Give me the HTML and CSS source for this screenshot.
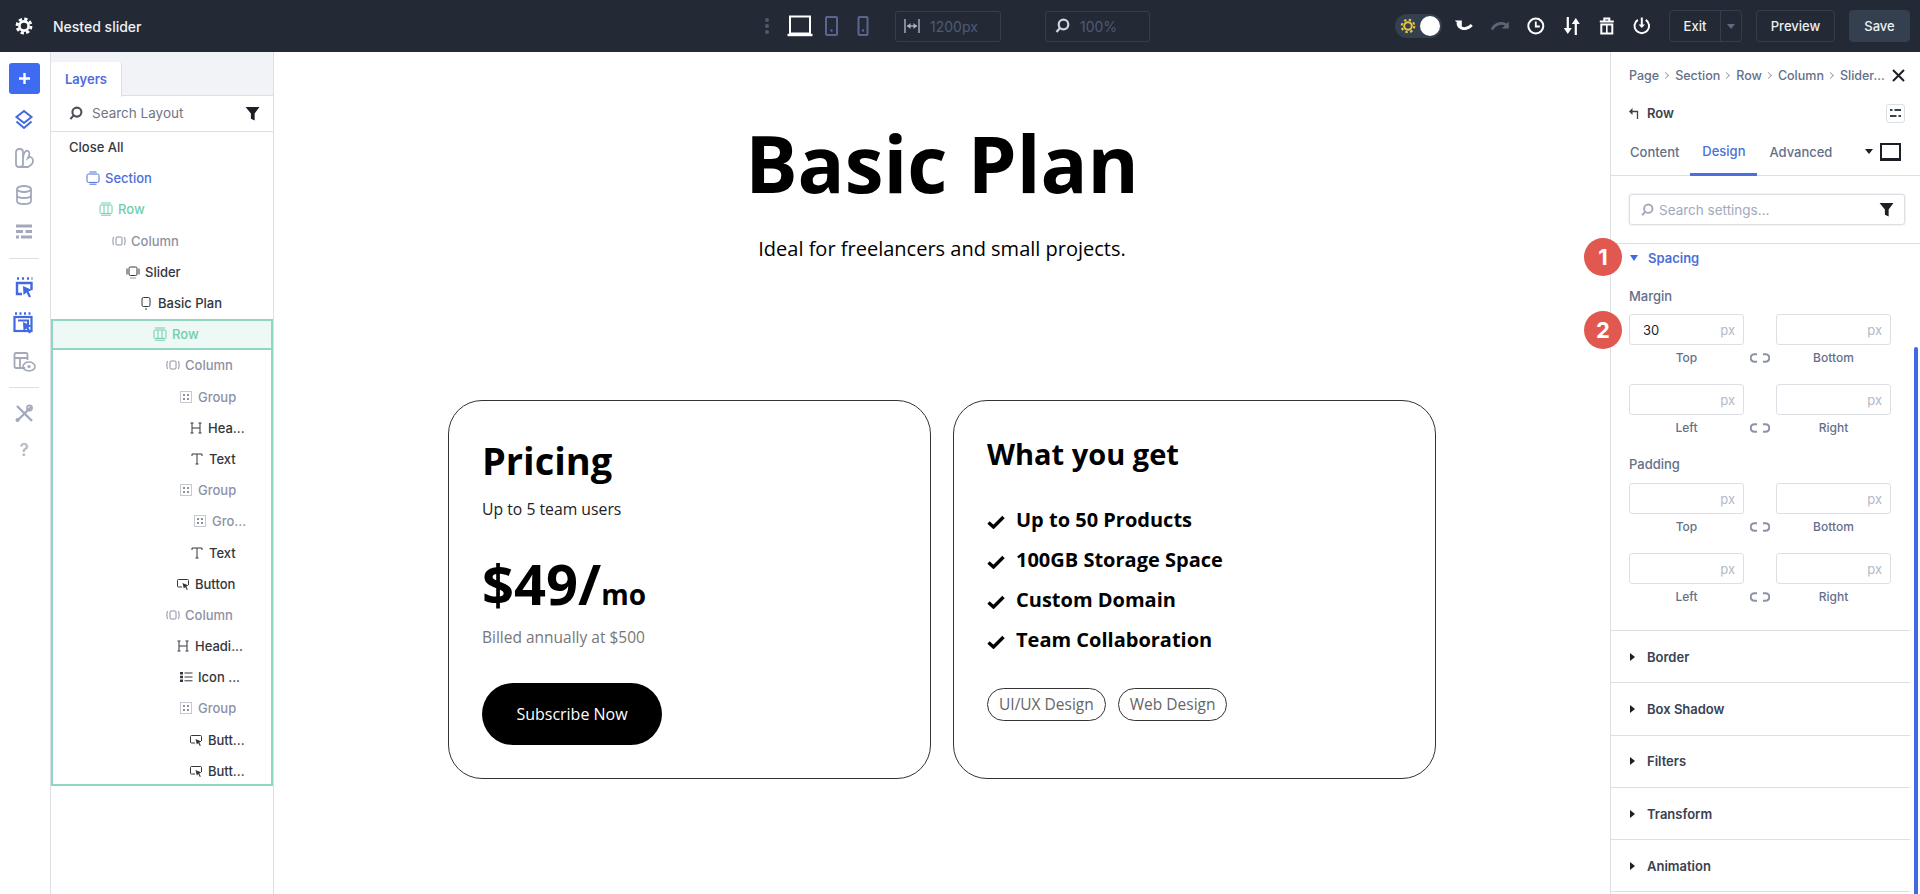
FILE: index.html
```html
<!DOCTYPE html>
<html>
<head>
    <title>Nested slider</title>
    <link rel="stylesheet" href="styles.css">
</head>
<body>
    <svg class="sprite" width="0" height="0">
        <symbol id="i-search" viewBox="0 0 16 16"><circle cx="9.5" cy="6.5" r="4.8" fill="none" stroke="currentColor" stroke-width="2.2"/><path d="M5.8 10.2 2.5 14" fill="none" stroke="currentColor" stroke-width="2.2"/></symbol>
        <symbol id="i-filter" viewBox="0 0 14 14"><path d="M0.5 1h13L9 7v6.5L5.5 12V7z" fill="currentColor"/></symbol>
        <symbol id="i-section" viewBox="0 0 14 14"><rect x="1" y="3" width="12" height="8.4" rx="1.5" fill="none" stroke="currentColor"/><path d="M3.5 1h7M3.5 13.2h7" stroke="currentColor"/></symbol>
        <symbol id="i-row" viewBox="0 0 14 14"><rect x="1" y="3" width="12" height="8.4" rx="1" fill="none" stroke="currentColor"/><path d="M5 3v8.4M9 3v8.4M2 1h10M2 13.2h10" stroke="currentColor"/></symbol>
        <symbol id="i-column" viewBox="0 0 14 14"><rect x="4" y="3" width="6" height="8" rx="1" fill="none" stroke="currentColor"/><path d="M1.5 3C.7 5 .7 9 1.5 11M12.5 3c.8 2 .8 6 0 8" fill="none" stroke="currentColor"/></symbol>
        <symbol id="i-slider" viewBox="0 0 14 14"><rect x="3" y="2" width="8" height="8.5" rx="1.5" fill="none" stroke="currentColor"/><path d="M1 3.5v6M13 3.5v6" stroke="currentColor"/><path d="M4.5 13h5" stroke="currentColor" stroke-dasharray="1 1"/></symbol>
        <symbol id="i-module" viewBox="0 0 14 14"><rect x="3" y="1.5" width="8" height="9" rx="1.5" fill="none" stroke="currentColor"/><path d="M6 13h2" stroke="currentColor"/></symbol>
        <symbol id="i-group" viewBox="0 0 14 14"><rect x="1.5" y="1.5" width="11" height="11" fill="none" stroke="currentColor" stroke-dasharray="1 1"/><path d="M4 4h2v2H4zM8 4h2v2H8zM4 8h2v2H4zM8 8h2v2H8z" fill="currentColor"/></symbol>
        <symbol id="i-head" viewBox="0 0 14 14"><path d="M3 2v10M11 2v10M3 7h8M1.5 2h3M1.5 12h3M9.5 2h3M9.5 12h3" fill="none" stroke="currentColor"/></symbol>
        <symbol id="i-text" viewBox="0 0 14 14"><path d="M7 2v10M2 4V2h10v2M5.5 12h3" fill="none" stroke="currentColor"/></symbol>
        <symbol id="i-button" viewBox="0 0 14 14"><path d="M6 10H2.500a1 1 0 0 1-1-1V3.500a1 1 0 0 1 1-1h9a1 1 0 0 1 1 1V8" fill="none" stroke="currentColor"/><path d="M6.500 6l6 2.500-2.200 1 1.500 3-1 .4-1.500-3-1.500 1.500z" fill="currentColor"/></symbol>
        <symbol id="i-list" viewBox="0 0 14 14"><path d="M1 2h3v2.400H1zM1 5.800h3v2.400H1zM1 9.600h3V12H1z" fill="currentColor"/><path d="M5.500 3h8M5.500 7h8M5.500 10.800h8" stroke="currentColor"/></symbol>
        <symbol id="i-link" viewBox="0 0 20 10"><path d="M7 1.200H4.500a3.800 3.800 0 0 0 0 7.600H7M13 1.200h2.500a3.800 3.800 0 0 1 0 7.600H13" fill="none" stroke="currentColor" stroke-width="2"/></symbol>
        <symbol id="i-pointer" viewBox="0 0 24 24"><path d="M5 3.500h2M10 3.500h2M15 3.500h2M19.500 3.500h1" stroke="currentColor" stroke-width="2.600"/><path d="M10 19H5V8h14.500v7" fill="none" stroke="currentColor" stroke-width="2.400"/><path d="M11 11l9 4-3.500 1.500 2.500 5-2 1-2.500-5-3 2.500z" fill="currentColor"/></symbol>
    </svg>

    <div class="app">
        <header class="topbar">
            <div class="tb-left">
                <svg class="gear" width="18" height="18" viewBox="0 0 18 18"><circle cx="9" cy="9" r="4.6" fill="none" stroke="#fff" stroke-width="2.600"/><circle cx="9" cy="9" r="7" fill="none" stroke="#fff" stroke-width="2.800" stroke-dasharray="3.300 2.200"/></svg>
                <span class="title">Nested slider</span>
            </div>
            <svg class="dots" width="10" height="18" viewBox="0 0 10 18"><circle cx="5" cy="3" r="2"/><circle cx="5" cy="9" r="2"/><circle cx="5" cy="15" r="2"/></svg>
            <svg class="dev-laptop" width="26" height="22" viewBox="0 0 26 22"><rect x="3" y="1.500" width="20" height="17" fill="none" stroke="#fff" stroke-width="2"/><path d="M0.5 20h25" stroke="#fff" stroke-width="2.400"/></svg>
            <svg class="dev-tablet" width="13" height="20" viewBox="0 0 13 20"><rect x="1" y="1" width="11" height="18" rx="1" fill="none" stroke="#5a6690" stroke-width="2"/><circle cx="6.500" cy="14.500" r="1.200" fill="#5a6690"/></svg>
            <svg class="dev-phone" width="12" height="20" viewBox="0 0 12 20"><rect x="1.500" y="1" width="9" height="18" rx="1" fill="none" stroke="#5a6690" stroke-width="2"/><circle cx="6" cy="14.500" r="1.200" fill="#5a6690"/></svg>
            <div class="tb-box width-box">
                <svg width="16" height="16" viewBox="0 0 16 16"><path d="M1 1v14M15 1v14" stroke="#a9b3c6" stroke-width="1.400"/><path d="M3 8h10" stroke="#a9b3c6" stroke-width="1.400"/><path d="M3 8l3.500-3v6zM13 8 9.500 5v6z" fill="#a9b3c6"/></svg>
                <span>1200px</span>
            </div>
            <div class="tb-box zoom-box">
                <svg class="zoom-ic" width="16" height="16"><use href="#i-search"/></svg>
                <span>100%</span>
            </div>
            <div class="toggle">
                <svg width="16" height="16" viewBox="0 0 16 16"><circle cx="8" cy="8" r="3.800" fill="none" stroke="#e9c545" stroke-width="2"/><circle cx="8" cy="8" r="6.300" fill="none" stroke="#e9c545" stroke-width="2" stroke-dasharray="2.500 2.450"/></svg>
                <span class="knob"></span>
            </div>
            <div class="tb-icons">
                <svg width="18" height="12" viewBox="0 0 18 12"><path d="M3 3c1 6 8 8 14 2" fill="none" stroke="#fff" stroke-width="2.800"/><path d="M0 0.500h7V7z" fill="#fff"/></svg>
                <svg width="18" height="12" viewBox="0 0 18 12"><path d="M1 9.500C5 3 12 2 15.500 5" fill="none" stroke="#5d6675" stroke-width="2.800"/><path d="M18 1.500v7h-7z" fill="#5d6675"/></svg>
                <svg width="18" height="18" viewBox="0 0 18 18"><circle cx="9" cy="9" r="7.500" fill="none" stroke="#fff" stroke-width="2"/><path d="M9 4.500V9.500h4" fill="none" stroke="#fff" stroke-width="1.800"/></svg>
                <svg width="18" height="20" viewBox="0 0 18 20"><path d="M5 1v12M13 7v12" stroke="#fff" stroke-width="2.200"/><path d="M1 12h8l-4 6zM9 8h8l-4-6z" fill="#fff"/></svg>
                <svg width="16" height="18" viewBox="0 0 16 18"><path d="M1 4.500h14M5.500 4V1.500h5V4" fill="none" stroke="#fff" stroke-width="2"/><rect x="2.500" y="7.500" width="11" height="9" fill="none" stroke="#fff" stroke-width="2"/><path d="M8 7.500v9" stroke="#fff" stroke-width="1.600"/></svg>
                <svg width="18" height="18" viewBox="0 0 18 18"><path d="M5 2.800a7.300 7.300 0 1 0 8 0" fill="none" stroke="#fff" stroke-width="2"/><path d="M9 .5v8" stroke="#fff" stroke-width="2"/><path d="M5.800 7.500h6.400L9 11z" fill="#fff"/></svg>
            </div>
            <div class="tb-btn exit-btn">
                <span class="exit-label">Exit</span>
                <span class="exit-arrow"></span>
            </div>
            <div class="tb-btn preview-btn">Preview</div>
            <div class="tb-btn save-btn">Save</div>
        </header>

        <div class="workspace">
            <nav class="rail">
                <div class="rail-add">
                    <svg width="13" height="13" viewBox="0 0 13 13"><path d="M6.500 1v11M1 6.500h11" stroke="#fff" stroke-width="2.400"/></svg>
                </div>
                <svg class="rail-ic blue r-layers" width="22" height="22" viewBox="0 0 22 22"><path d="M11 2l7.500 6L11 14 3.500 8z" fill="none" stroke="currentColor" stroke-width="2"/><path d="M3.500 12.500 11 19l7.500-6.500" fill="none" stroke="currentColor" stroke-width="2"/></svg>
                <svg class="rail-ic r-pal" width="22" height="22" viewBox="0 0 22 22"><rect x="3" y="2" width="7" height="18" rx="3" fill="none" stroke="currentColor" stroke-width="1.800"/><path d="M10 10c1-5 3-7 5-6s2 3 0 7c3-2 5 0 5 3s-3 5-5 6h-8" fill="none" stroke="currentColor" stroke-width="1.800"/></svg>
                <svg class="rail-ic r-db" width="22" height="22" viewBox="0 0 22 22"><ellipse cx="11" cy="5" rx="7" ry="3" fill="none" stroke="currentColor" stroke-width="1.800"/><path d="M4 5v12c0 4 14 4 14 0V5M4 11c0 4 14 4 14 0" fill="none" stroke="currentColor" stroke-width="1.800"/></svg>
                <svg class="rail-ic r-tab" width="22" height="22" viewBox="0 0 22 22"><path d="M3 5h16M3 10.500h7M12.500 10.500H19M3 16h3M8 16h11" stroke="currentColor" stroke-width="2.800"/></svg>
                <div class="rail-sep"></div>
                <svg class="rail-ic blue r-p1" width="24" height="24"><use href="#i-pointer"/></svg>
                <svg class="rail-ic blue r-p2" width="24" height="24" viewBox="0 0 24 24"><path d="M3 2.500h2M7.500 2.500h2M12 2.500h2M16.500 2.500h2" stroke="currentColor" stroke-width="2.600"/><rect x="2.500" y="6" width="17" height="14" fill="none" stroke="currentColor" stroke-width="2.200"/><path d="M6 9.500h10v5" fill="none" stroke="currentColor" stroke-width="2"/><path d="M11 11l9 4-3.500 1.500 2.500 5-2 1-2.500-5-3 2.500z" fill="currentColor"/></svg>
                <svg class="rail-ic r-view" width="24" height="22" viewBox="0 0 24 22"><path d="M13 17H4a1.500 1.500 0 0 1-1.500-1.500v-12A1.500 1.500 0 0 1 4 2h10a1.500 1.500 0 0 1 1.500 1.500V9M2.500 7h13M8 7v10" fill="none" stroke="currentColor" stroke-width="1.800"/><ellipse cx="17" cy="15.500" rx="6" ry="4.500" fill="none" stroke="currentColor" stroke-width="1.600"/><circle cx="17" cy="15.500" r="1.600" fill="currentColor"/></svg>
                <div class="rail-sep sep-2"></div>
                <svg class="rail-ic r-tool" width="20" height="20" viewBox="0 0 20 20"><path d="M3 2l15 15M17 3 3 17" stroke="currentColor" stroke-width="2.400"/><circle cx="15.500" cy="4" r="2.600" fill="none" stroke="currentColor" stroke-width="1.600"/><circle cx="3.500" cy="16" r="2" fill="currentColor"/></svg>
                <div class="rail-help">?</div>
            </nav>

            <aside class="layers">
                <div class="layers-tabs"><div class="layers-tab">Layers</div></div>
                <div class="layers-search">
                    <svg class="search-ic" width="15" height="15"><use href="#i-search"/></svg>
                    <span class="search-ph">Search Layout</span>
                    <svg class="filter-ic" width="15" height="15"><use href="#i-filter"/></svg>
                </div>
                <ul class="tree">
                    <li class="node d0">Close All</li>
                    <li class="node d1 blue"><svg class="ic"><use href="#i-section"/></svg>Section</li>
                    <li class="node d2 green"><svg class="ic"><use href="#i-row"/></svg>Row</li>
                    <li class="node d3 muted"><svg class="ic"><use href="#i-column"/></svg>Column</li>
                    <li class="node d4"><svg class="ic"><use href="#i-slider"/></svg>Slider</li>
                    <li class="node d5"><svg class="ic"><use href="#i-module"/></svg>Basic Plan</li>
                    <li class="node d6 green picked"><svg class="ic"><use href="#i-row"/></svg>Row</li>
                    <li>
                        <ul class="picked-box">
                            <li class="node d7 muted"><svg class="ic"><use href="#i-column"/></svg>Column</li>
                            <li class="node d8 muted"><svg class="ic"><use href="#i-group"/></svg>Group</li>
                            <li class="node d9"><svg class="ic"><use href="#i-head"/></svg>Hea...</li>
                            <li class="node d9b"><svg class="ic"><use href="#i-text"/></svg>Text</li>
                            <li class="node d8 muted"><svg class="ic"><use href="#i-group"/></svg>Group</li>
                            <li class="node d10 muted"><svg class="ic"><use href="#i-group"/></svg>Gro...</li>
                            <li class="node d9b"><svg class="ic"><use href="#i-text"/></svg>Text</li>
                            <li class="node d11"><svg class="ic"><use href="#i-button"/></svg>Button</li>
                            <li class="node d7 muted"><svg class="ic"><use href="#i-column"/></svg>Column</li>
                            <li class="node d11"><svg class="ic"><use href="#i-head"/></svg>Headi...</li>
                            <li class="node d8"><svg class="ic"><use href="#i-list"/></svg>Icon ...</li>
                            <li class="node d8 muted"><svg class="ic"><use href="#i-group"/></svg>Group</li>
                            <li class="node d9"><svg class="ic"><use href="#i-button"/></svg>Butt...</li>
                            <li class="node d9"><svg class="ic"><use href="#i-button"/></svg>Butt...</li>
                        </ul>
                    </li>
                </ul>
            </aside>

            <main class="canvas">
                <h1 class="plan-title">Basic Plan</h1>
                <p class="plan-sub">Ideal for freelancers and small projects.</p>
                <div class="cards">
                    <section class="card">
                        <h2 class="price-head">Pricing</h2>
                        <p class="price-users">Up to 5 team users</p>
                        <div class="price">$49/<span class="price-unit">mo</span></div>
                        <p class="price-note">Billed annually at $500</p>
                        <a class="subscribe">Subscribe Now</a>
                    </section>
                    <section class="card">
                        <h2 class="get-head">What you get</h2>
                        <ul class="get-list">
                            <li><svg class="check" viewBox="0 0 18 14"><path d="M1.500 7.500 6.500 12 16.500 2" fill="none" stroke="#000" stroke-width="3.400"/></svg>Up to 50 Products</li>
                            <li><svg class="check" viewBox="0 0 18 14"><path d="M1.500 7.500 6.500 12 16.500 2" fill="none" stroke="#000" stroke-width="3.400"/></svg>100GB Storage Space</li>
                            <li><svg class="check" viewBox="0 0 18 14"><path d="M1.500 7.500 6.500 12 16.500 2" fill="none" stroke="#000" stroke-width="3.400"/></svg>Custom Domain</li>
                            <li><svg class="check" viewBox="0 0 18 14"><path d="M1.500 7.500 6.500 12 16.500 2" fill="none" stroke="#000" stroke-width="3.400"/></svg>Team Collaboration</li>
                        </ul>
                        <div class="pills">
                            <span class="pill">UI/UX Design</span>
                            <span class="pill">Web Design</span>
                        </div>
                    </section>
                </div>
            </main>

            <aside class="settings">
                <div class="crumbs">
                    <span>Page</span><i class="sep"></i><span>Section</span><i class="sep"></i><span>Row</span><i class="sep"></i><span>Column</span><i class="sep"></i><span>Slider...</span>
                    <svg class="close" width="13" height="13" viewBox="0 0 13 13"><path d="M1 1l11 11M12 1 1 12" stroke="#1c1f26" stroke-width="2"/></svg>
                </div>
                <div class="row-head">
                    <svg width="10" height="11" viewBox="0 0 10 11"><path d="M8.500 11V3.500H2" fill="none" stroke="#3a4150" stroke-width="1.300"/><path d="M0 3.500 3.500 0v7z" fill="#3a4150"/></svg>
                    <span class="row-name">Row</span>
                    <div class="row-opts">
                        <svg width="11" height="10" viewBox="0 0 11 10"><path d="M0 2h2.500M4.500 2H11M0 8h6.500M8.500 8H11" stroke="#3a4150" stroke-width="1.800"/></svg>
                    </div>
                </div>
                <div class="tabs">
                    <span class="tab">Content</span>
                    <span class="tab active">Design</span>
                    <span class="tab">Advanced</span>
                    <span class="tab-caret"></span>
                    <span class="tab-device"></span>
                </div>
                <div class="settings-search">
                    <div class="search-box">
                        <svg class="search-ic light" width="14" height="14"><use href="#i-search"/></svg>
                        <span class="search-ph light">Search settings...</span>
                        <svg class="filter-ic" width="15" height="15"><use href="#i-filter"/></svg>
                    </div>
                </div>

                <div class="group open">
                    <div class="group-head blue"><span class="caret-down"></span>Spacing</div>
                    <div class="field-label first">Margin</div>
                    <div class="fields">
                        <div class="input"><span class="val">30</span><span class="unit">px</span></div>
                        <span class="gap-cell"></span>
                        <div class="input"><span class="unit">px</span></div>
                        <span class="cap">Top</span>
                        <svg class="link"><use href="#i-link"/></svg>
                        <span class="cap">Bottom</span>
                        <div class="input"><span class="unit">px</span></div>
                        <span class="gap-cell"></span>
                        <div class="input"><span class="unit">px</span></div>
                        <span class="cap">Left</span>
                        <svg class="link"><use href="#i-link"/></svg>
                        <span class="cap">Right</span>
                    </div>
                    <div class="field-label">Padding</div>
                    <div class="fields">
                        <div class="input"><span class="unit">px</span></div>
                        <span class="gap-cell"></span>
                        <div class="input"><span class="unit">px</span></div>
                        <span class="cap">Top</span>
                        <svg class="link"><use href="#i-link"/></svg>
                        <span class="cap">Bottom</span>
                        <div class="input"><span class="unit">px</span></div>
                        <span class="gap-cell"></span>
                        <div class="input"><span class="unit">px</span></div>
                        <span class="cap">Left</span>
                        <svg class="link"><use href="#i-link"/></svg>
                        <span class="cap">Right</span>
                    </div>
                </div>
                <div class="group shut"><span class="caret-right"></span>Border</div>
                <div class="group shut"><span class="caret-right"></span>Box Shadow</div>
                <div class="group shut"><span class="caret-right"></span>Filters</div>
                <div class="group shut"><span class="caret-right"></span>Transform</div>
                <div class="group shut"><span class="caret-right"></span>Animation</div>

                <div class="scrollbar"></div>
                <div class="badge badge-1">1</div>
                <div class="badge badge-2">2</div>
            </aside>
        </div>
    </div>
</body>
</html>
```

FILE: styles.css
```css
* {
    box-sizing: border-box;
}
body {
    margin: 0;
    font-family: Inter, 'Liberation Sans', sans-serif;
    font-size: 13px;
    color: #33363d;
    background: #fff;
}
ul {
    list-style: none;
    margin: 0;
    padding: 0;
}
.sprite {
    position: absolute;
}
.app {
    display: flex;
    flex-direction: column;
    height: 100vh;
    overflow: hidden;
}

/* top bar */
.topbar {
    display: flex;
    align-items: center;
    flex: 0 0 52px;
    background: #232a35;
    color: #fff;
}
.tb-left {
    display: flex;
    align-items: center;
    width: 762px;
    padding-left: 15px;
}
.title {
    margin-left: 20px;
    font-size: 14px;
    font-weight: 500;
    color: #eef0f3;
}
.dots {
    fill: #4f5a6e;
}
.dev-laptop {
    margin-left: 15px;
}
.dev-tablet {
    margin-left: 12px;
}
.dev-phone {
    margin-left: 19px;
}
.tb-box {
    display: flex;
    align-items: center;
    gap: 10px;
    height: 31px;
    border: 1px solid #353e4c;
    border-radius: 3px;
    padding-left: 8px;
    font-size: 14px;
    color: #4d5a78;
}
.width-box {
    width: 106px;
    margin-left: 26px;
}
.zoom-box {
    width: 105px;
    margin-left: 44px;
}
.zoom-ic {
    color: #cfd5df;
}
.toggle {
    display: flex;
    align-items: center;
    justify-content: space-between;
    width: 47px;
    height: 24px;
    margin-left: 245px;
    padding: 0 2px 0 5px;
    border-radius: 12px;
    background: #343f50;
}
.knob {
    width: 20px;
    height: 20px;
    border-radius: 50%;
    background: #fff;
}
.tb-icons {
    display: flex;
    align-items: center;
    justify-content: space-between;
    width: 214px;
    margin-left: 4px;
}
.tb-icons svg {
    box-sizing: content-box;
    padding: 0 8.8px;
}
.tb-btn {
    display: flex;
    align-items: center;
    justify-content: center;
    height: 32px;
    border: 1px solid #353e4c;
    border-radius: 4px;
    font-weight: 500;
    color: #eef0f3;
}
.exit-btn {
    width: 73px;
    margin-left: 9px;
}
.exit-label {
    flex: 1;
    text-align: center;
}
.exit-arrow {
    display: flex;
    align-items: center;
    justify-content: center;
    width: 21px;
    height: 100%;
    border-left: 1px solid #353e4c;
}
.exit-arrow::before {
    content: '';
    border-left: 4px solid transparent;
    border-right: 4px solid transparent;
    border-top: 5px solid #5d6a82;
}
.preview-btn {
    width: 79px;
    margin-left: 14px;
}
.save-btn {
    width: 61px;
    margin-left: 14px;
    border-color: #34404f;
    background: #34404f;
}

/* layout */
.workspace {
    position: relative;
    display: flex;
    flex: 1;
    min-height: 0;
}

/* icon rail */
.rail {
    position: relative;
    flex: 0 0 51px;
    display: flex;
    flex-direction: column;
    align-items: center;
    padding-right: 2px;
    border-right: 1px solid #dcdfe4;
    color: #a3a9bb;
}
.rail .blue {
    color: #4169e1;
}
.rail-add {
    display: flex;
    align-items: center;
    justify-content: center;
    width: 31px;
    height: 31px;
    margin-top: 11px;
    border-radius: 3px;
    background: #3e6bf0;
}
.rail-ic {
    display: block;
}
.r-layers {
    margin-top: 15px;
}
.r-pal {
    margin-top: 16px;
}
.r-db {
    margin-top: 15px;
}
.r-tab {
    margin-top: 15px;
}
.rail-sep {
    width: 30px;
    height: 1px;
    margin-top: 15px;
    background: #dcdfe4;
}
.r-p1 {
    margin-top: 16px;
}
.r-p2 {
    margin-top: 12px;
}
.r-view {
    margin-top: 16px;
}
.sep-2 {
    margin-top: 14px;
}
.r-tool {
    margin-top: 16px;
}
.rail-help {
    margin-top: 16px;
    font-size: 17px;
    font-weight: 600;
    line-height: 20px;
    color: #b4b9c7;
}

/* layers panel */
.layers {
    flex: 0 0 223px;
    border-right: 1px solid #dcdfe4;
}
.layers-tabs {
    height: 44px;
    padding-top: 10px;
    background: #f1f3f7;
    border-bottom: 1px solid #dcdfe4;
}
.layers-tab {
    width: 71px;
    height: 35px;
    padding-left: 14px;
    border-radius: 3px 3px 0 0;
    border-right: 1px solid #dcdfe4;
    background: #fff;
    font-weight: 600;
    line-height: 35px;
    color: #4c6ed8;
}
.layers-search {
    display: flex;
    align-items: center;
    height: 35.500px;
    padding: 0 13px 0 17px;
    border-bottom: 1px solid #dcdfe4;
}
.search-ic {
    color: #4a4f5a;
}
.search-ph {
    flex: 1;
    margin-left: 9px;
    font-size: 13.500px;
    color: #6f7585;
}
.filter-ic {
    color: #1c1f26;
}
.node {
    display: flex;
    align-items: center;
    height: 31.2px;
    font-weight: 500;
    white-space: nowrap;
}
.ic {
    flex: 0 0 14px;
    width: 14px;
    height: 14px;
    margin-right: 5px;
}
.d0 {
    padding-left: 18px;
}
.d1 {
    padding-left: 35px;
}
.d2 {
    padding-left: 48px;
}
.d3 {
    padding-left: 61px;
}
.d4 {
    padding-left: 75px;
}
.d5 {
    padding-left: 88px;
}
.d6 {
    padding-left: 102px;
}
.d7 {
    padding-left: 115px;
}
.d8 {
    padding-left: 128px;
}
.d9 {
    padding-left: 138px;
}
.d9b {
    padding-left: 139px;
}
.d10 {
    padding-left: 142px;
}
.d11 {
    padding-left: 125px;
}
.node.blue {
    color: #4c6ed8;
}
.node.green {
    color: #6fcfad;
}
.node.muted {
    color: #8b92a5;
}
.picked {
    background: #eef8f5;
    box-shadow: inset 0 0 0 2px #8fd6c3;
}
.picked-box {
    box-shadow: inset 2px 0 0 #8fd6c3, inset -2px 0 0 #8fd6c3, inset 0 -2px 0 #8fd6c3;
}

/* page canvas */
.canvas {
    flex: 1;
    min-width: 0;
    padding-top: 63px;
    font-family: 'Open Sans', sans-serif;
    color: #000;
}
.plan-title {
    margin: 0;
    font-size: 78px;
    font-weight: 700;
    line-height: 96px;
    text-align: center;
}
.plan-sub {
    margin: 24px 0 0;
    font-size: 20px;
    line-height: 27px;
    text-align: center;
}
.cards {
    display: flex;
    justify-content: center;
    gap: 22px;
    margin-top: 138px;
}
.card {
    width: 483px;
    height: 379px;
    padding: 0 33px;
    border: 1.5px solid #333;
    border-radius: 34px;
}
.price-head {
    margin: 34px 0 0;
    font-size: 38px;
    line-height: 50px;
}
.price-users {
    margin: 12px 0 0;
    font-size: 15.750px;
    line-height: 24px;
    color: #222;
}
.price {
    margin-top: 27px;
    font-size: 56px;
    font-weight: 700;
    line-height: 70px;
}
.price-unit {
    font-size: 28px;
}
.price-note {
    margin: -4px 0 0;
    font-size: 15.500px;
    line-height: 24px;
    color: #777;
}
.subscribe {
    display: block;
    width: 180px;
    height: 62px;
    margin-top: 34px;
    border-radius: 31px;
    background: #000;
    color: #fff;
    font-size: 16px;
    line-height: 62px;
    text-align: center;
}
.get-head {
    margin: 34px 0 0;
    font-size: 29px;
    line-height: 38px;
}
.get-list {
    margin-top: 26px;
}
.get-list li {
    display: flex;
    align-items: center;
    height: 40px;
    font-size: 20px;
    font-weight: 700;
}
.check {
    width: 18px;
    height: 14px;
    margin: 6px 11px 0 0;
}
.pills {
    display: flex;
    gap: 12px;
    margin-top: 29px;
}
.pill {
    height: 33px;
    padding: 0 11px;
    border: 1.5px solid #333;
    border-radius: 17px;
    font-size: 15.500px;
    line-height: 30px;
    color: #666;
}

/* settings panel */
.settings {
    position: relative;
    flex: 0 0 310px;
    border-left: 1px solid #dcdfe4;
    padding-right: 10px;
}
.crumbs {
    display: flex;
    align-items: center;
    height: 46px;
    padding-left: 18px;
    font-size: 12.500px;
    font-weight: 500;
    color: #646f8a;
    white-space: nowrap;
}
.sep {
    width: 5px;
    height: 5px;
    margin: 0 7px 0 4px;
    border-top: 1px solid #a3a9bb;
    border-right: 1px solid #a3a9bb;
    transform: rotate(45deg);
}
.close {
    margin-left: 7px;
}
.row-head {
    display: flex;
    align-items: center;
    height: 30px;
    padding-left: 18px;
}
.row-name {
    flex: 1;
    margin-left: 8px;
    font-weight: 600;
    color: #3a4150;
}
.row-opts {
    display: flex;
    align-items: center;
    justify-content: center;
    width: 19px;
    height: 19px;
    margin-right: 5px;
    border: 1px solid #dcdfe4;
    border-radius: 3px;
}
.tabs {
    position: relative;
    display: flex;
    align-items: center;
    height: 48px;
    margin-right: -10px;
    padding-left: 19px;
    border-bottom: 1px solid #dcdfe4;
}
.tab {
    font-weight: 500;
    color: #646f8a;
}
.tab.active {
    align-self: stretch;
    width: 67px;
    height: 48px;
    margin: 0 12px 0 11px;
    border-bottom: 3px solid #4a6fe0;
    color: #4c6ed8;
    line-height: 47px;
    text-align: center;
}
.tab-caret {
    margin-left: 33px;
    border-left: 4px solid transparent;
    border-right: 4px solid transparent;
    border-top: 5px solid #1c1f26;
}
.tab-device {
    width: 21px;
    height: 18px;
    margin-left: 7px;
    border: 2px solid #1c1f26;
    border-bottom-width: 3px;
}
.settings-search {
    height: 68px;
    margin-right: -10px;
    padding: 18px 15px 0 18px;
    border-bottom: 1px solid #dcdfe4;
}
.search-box {
    display: flex;
    align-items: center;
    height: 31px;
    padding: 0 10px;
    border: 1px solid #dcdfe4;
    border-radius: 3px;
    box-shadow: 0 0 0 1px #f1f3f7;
}
.search-ic.light {
    color: #a3a9bb;
}
.search-ph.light {
    margin-left: 5px;
    color: #a3a9bb;
}
.group.open {
    height: 387px;
    padding: 0 18px;
    border-bottom: 1px solid #dcdfe4;
}
.group-head {
    display: flex;
    align-items: center;
    height: 28px;
    font-weight: 600;
}
.group-head.blue {
    color: #4c6ed8;
}
.caret-down {
    width: 0;
    margin-right: 10px;
    margin-left: 1px;
    border-left: 4px solid transparent;
    border-right: 4px solid transparent;
    border-top: 6px solid #4169e1;
}
.field-label {
    height: 20px;
    margin-top: 13px;
    margin-bottom: 9px;
    font-weight: 500;
    line-height: 20px;
    color: #646f8a;
}
.field-label.first {
    margin-top: 14px;
    margin-bottom: 8px;
}
.fields {
    display: grid;
    grid-template-columns: 115px 32px 115px;
    grid-template-rows: 31px 39px 31px 26px;
}
.input {
    display: flex;
    align-items: center;
    justify-content: space-between;
    height: 31px;
    padding: 0 8px 0 13px;
    border: 1px solid #dcdfe4;
    border-radius: 3px;
    background: #fff;
}
.input .unit {
    margin-left: auto;
    color: #b4b9c7;
}
.val {
    color: #1c1f26;
}
.cap {
    font-size: 12px;
    font-weight: 500;
    line-height: 26px;
    color: #646f8a;
    text-align: center;
}
.link {
    justify-self: center;
    width: 20px;
    height: 10px;
    margin-top: 8px;
    color: #8b92a5;
}
.group.shut {
    display: flex;
    align-items: center;
    height: 52.300px;
    padding-left: 19px;
    border-bottom: 1px solid #dcdfe4;
    font-weight: 600;
    color: #3a4150;
}
.caret-right {
    margin-right: 12px;
    border-top: 4px solid transparent;
    border-bottom: 4px solid transparent;
    border-left: 5px solid #1c1f26;
}
.scrollbar {
    position: absolute;
    top: 295px;
    right: 2px;
    bottom: 0;
    width: 4px;
    border-radius: 2px 2px 0 0;
    background: #4169e1;
}
.badge {
    position: absolute;
    left: -27px;
    width: 38px;
    height: 38px;
    border-radius: 50%;
    background: #e0584f;
    color: #fff;
    font-size: 22px;
    font-weight: 700;
    line-height: 38px;
    text-align: center;
}
.badge-1 {
    top: 186px;
}
.badge-2 {
    top: 259px;
}
```
